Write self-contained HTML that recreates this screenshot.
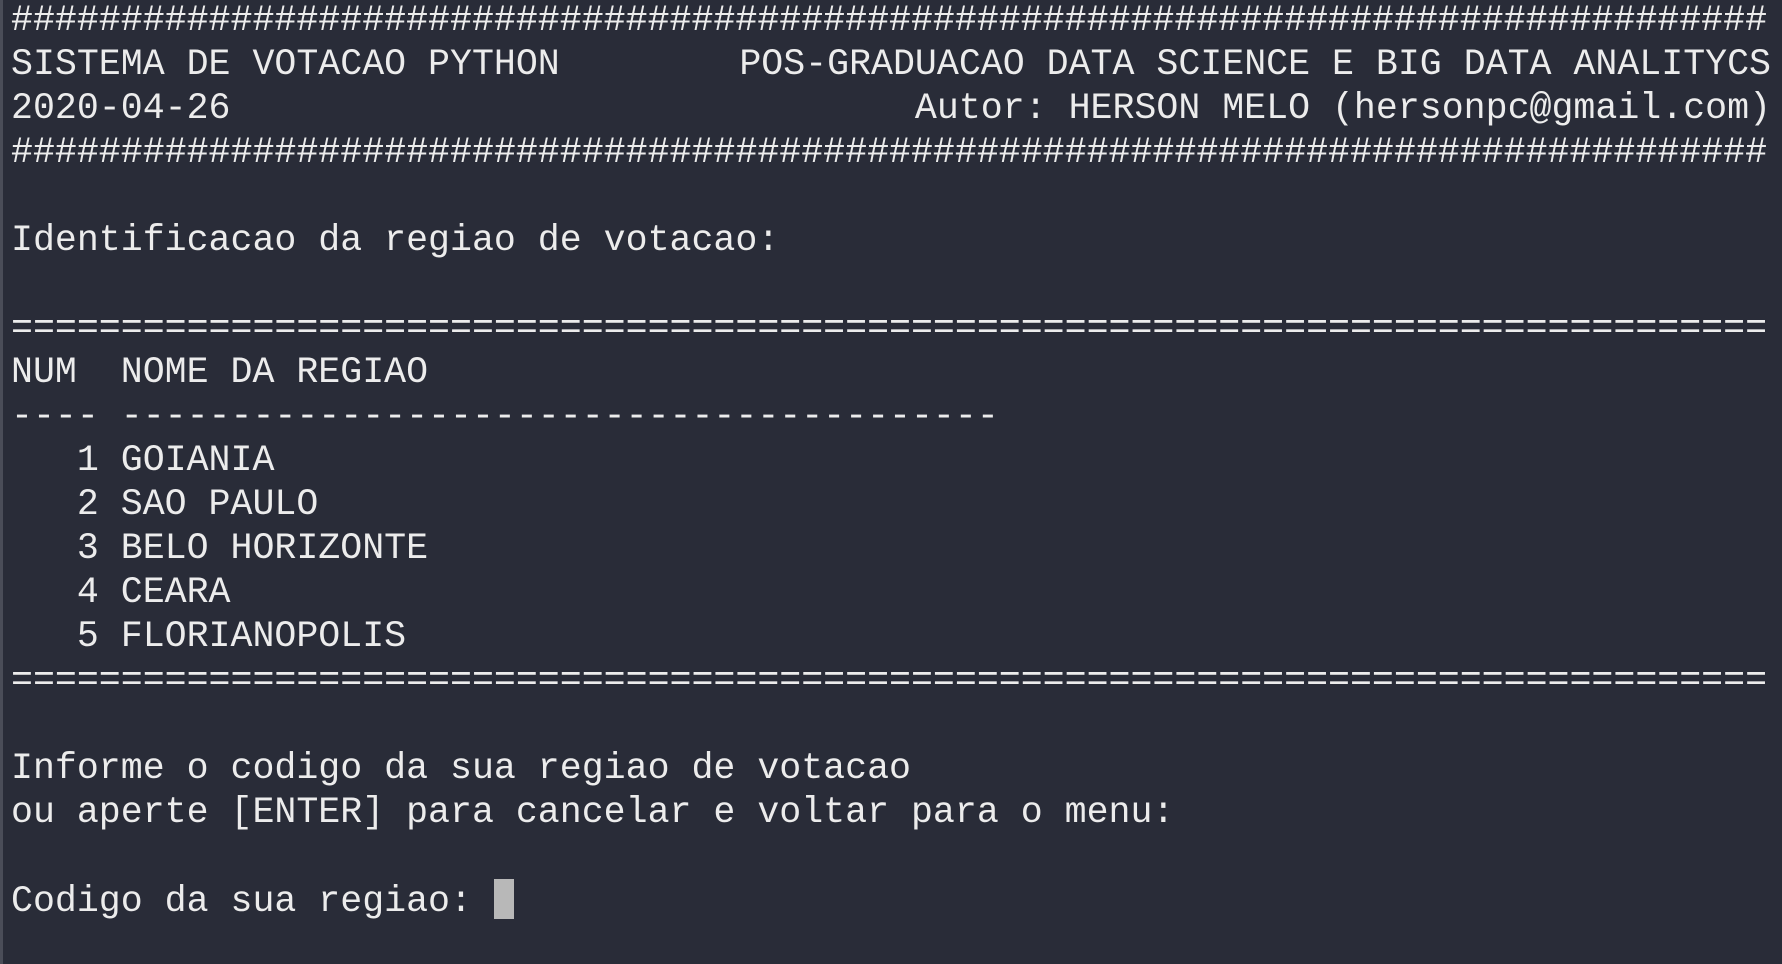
<!DOCTYPE html>
<html><head><meta charset="utf-8"><style>
html,body{margin:0;padding:0;background:#292c38;width:1782px;height:964px;overflow:hidden}
.b{position:absolute;left:0;top:0;width:3px;height:964px;background:#4a4d58}
.t{position:absolute;left:11px;top:-1px;width:1760px;font-family:"Liberation Mono",monospace;font-size:36.6px;line-height:44px;color:#ececec;white-space:pre}
.r{display:flex;justify-content:space-between;width:1760px}
.c{display:inline-block;width:20px;height:40px;background:#b8b8b8;vertical-align:-8px}
</style></head><body><div class="b"></div><div class="t">################################################################################
<div class="r"><span>SISTEMA DE VOTACAO PYTHON</span><span>POS-GRADUACAO DATA SCIENCE E BIG DATA ANALITYCS</span></div><div class="r"><span>2020-04-26</span><span>Autor: HERSON MELO (hersonpc@gmail.com)</span></div>################################################################################

Identificacao da regiao de votacao:

================================================================================
NUM  NOME DA REGIAO
---- ----------------------------------------
   1 GOIANIA
   2 SAO PAULO
   3 BELO HORIZONTE
   4 CEARA
   5 FLORIANOPOLIS
================================================================================

Informe o codigo da sua regiao de votacao
ou aperte [ENTER] para cancelar e voltar para o menu:

Codigo da sua regiao: <span class="c"></span></div></body></html>
